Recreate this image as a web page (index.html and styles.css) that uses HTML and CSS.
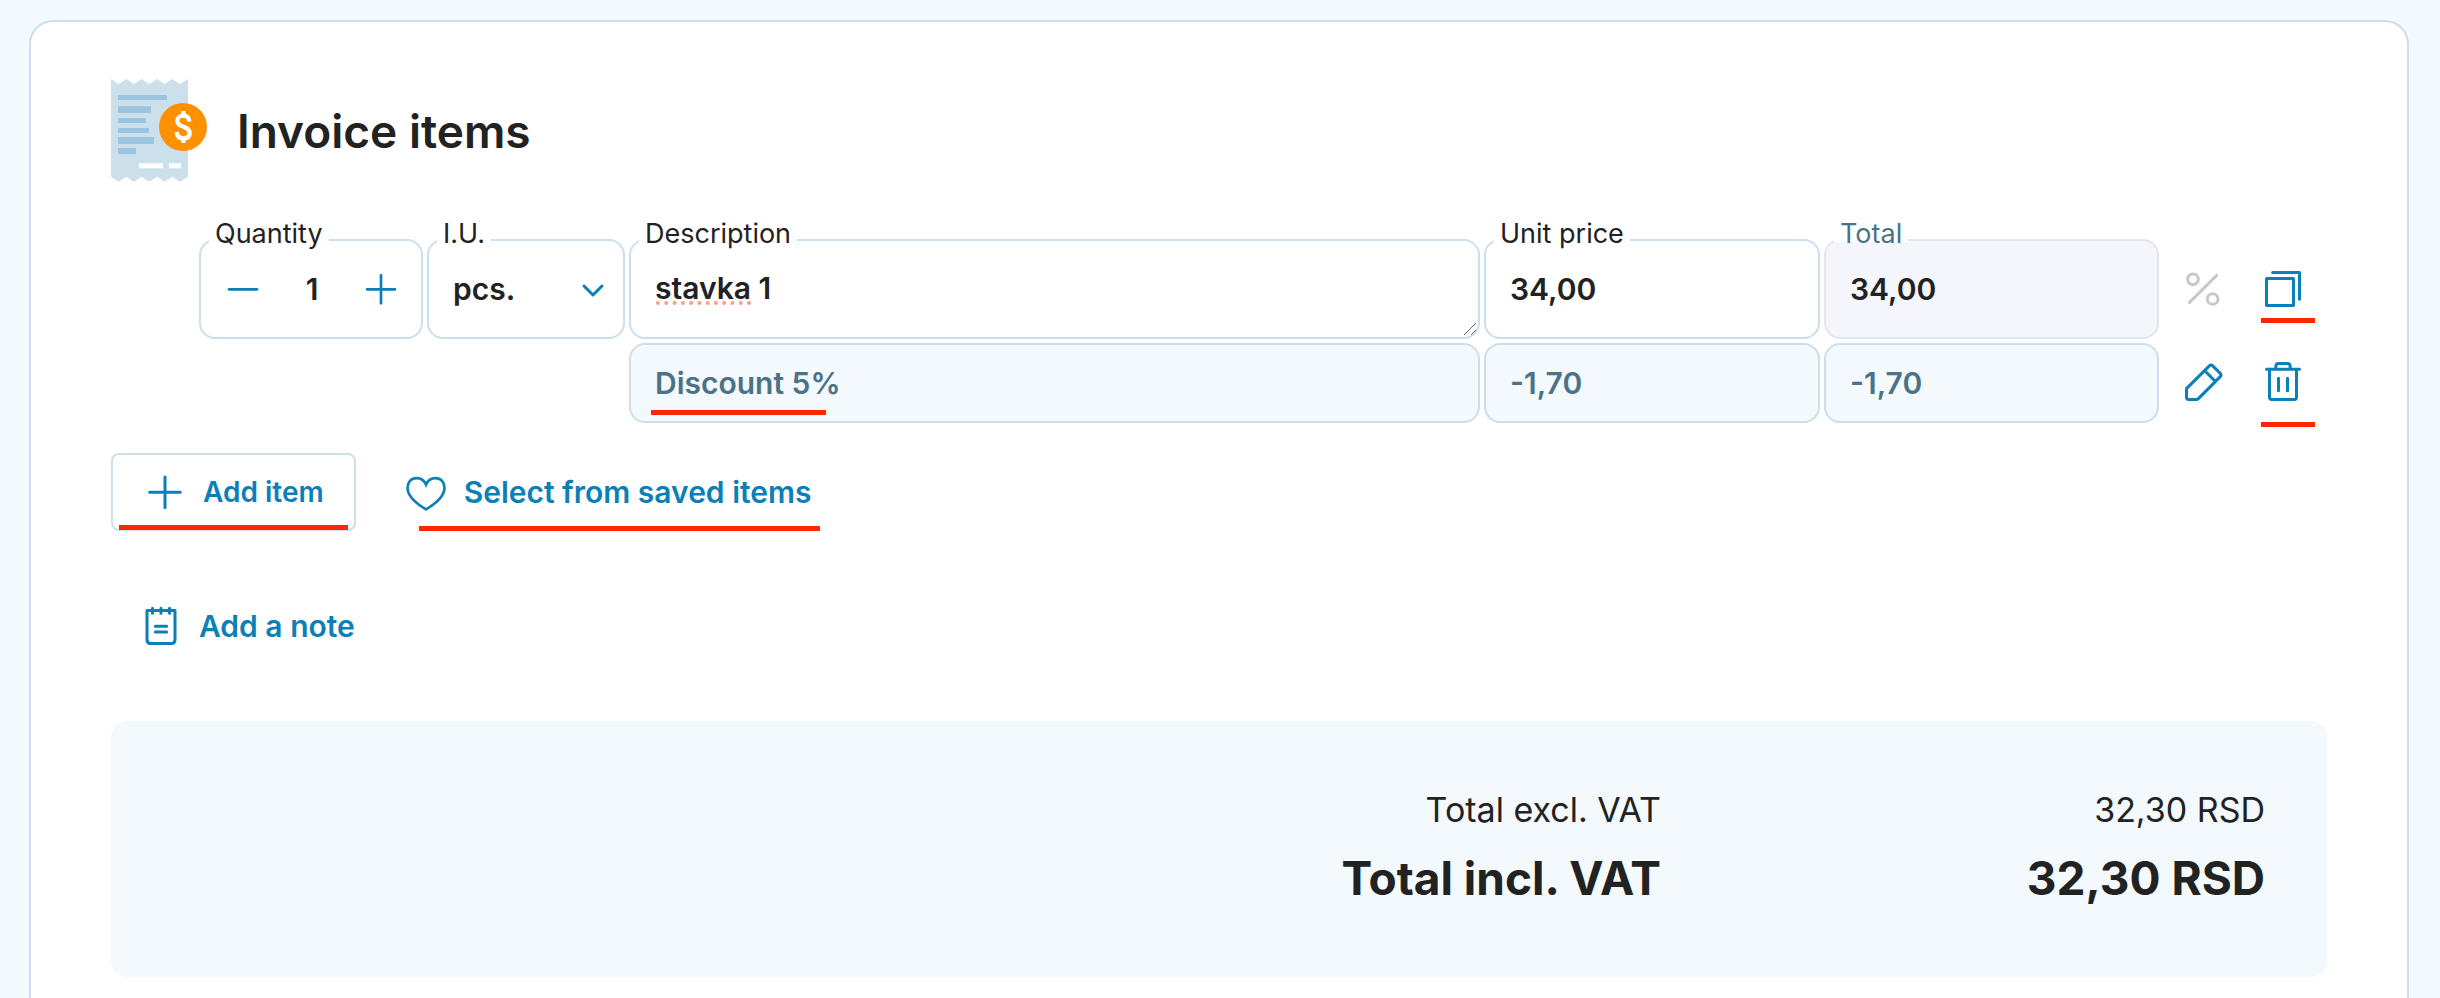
FILE: index.html
```html
<!DOCTYPE html>
<html lang="en">
<head>
<meta charset="utf-8">
<meta name="viewport" content="width=device-width, initial-scale=1">
<title>Invoice items</title>
<link rel="stylesheet" href="styles.css">
</head>
<body>
<main class="card">
  <header class="card-header">
    <svg class="receipt" viewBox="0 0 288 309" aria-hidden="true">
      <path fill="#cce0ec" d="M0 0L23 15L46 0L69 15L92 0L115 15L138 0L161 15L184 0L207 15L231 0V293L207 308L184 293L161 308L138 293L115 308L92 293L69 308L46 293L23 308L0 293Z"/>
      <path fill="#9cc4df" d="M21 48H168V63H21ZM21 82H120V102H21ZM21 117H105V132H21ZM21 147H114V162H21ZM21 174H129V195H21ZM21 207H75V225H21Z"/>
      <path fill="#fff" d="M84 253H156V268H84ZM174 253H210V268H174Z"/>
      <circle cx="216" cy="144" r="72" fill="#ff9100"/>
      <path fill="none" stroke="#fff" stroke-width="13" stroke-linecap="butt" d="M217 96V110M217 178V192M235 128C234 115 226 110 217 110C207 110 199 116 199 126C199 148 236 139 236 162C236 173 228 178 217 178C206 178 198 173 197 159"/>
    </svg>
    <h1 class="title">Invoice items</h1>
  </header>

  <form class="items">
    <div class="item-grid">
      <div class="field">
        <label class="field-label" for="qty">Quantity</label>
        <div class="box stepper">
          <button class="step" type="button" aria-label="Decrease">
            <svg class="icon" viewBox="0 0 120 120"><path stroke-width="8" d="M18 61H102"/></svg>
          </button>
          <input class="qty" id="qty" type="text" value="1">
          <button class="step" type="button" aria-label="Increase">
            <svg class="icon" viewBox="0 0 120 120"><path stroke-width="8" d="M18 61H102M60 19V103"/></svg>
          </button>
        </div>
      </div>
      <div class="field">
        <label class="field-label" for="unit">I.U.</label>
        <select class="box value" id="unit"><option>pcs.</option></select>
        <svg class="chevron" viewBox="0 0 24 16" aria-hidden="true"><path d="M3 3L12 12L21 3"/></svg>
      </div>
      <div class="field">
        <label class="field-label" for="desc">Description</label>
        <textarea class="box value desc" id="desc" rows="1" spellcheck="false">stavka 1</textarea>
        <svg class="spelling" viewBox="0 0 96 4" aria-hidden="true"><path d="M2 2H94"/></svg>
        <svg class="grip" viewBox="0 0 14 14" aria-hidden="true"><path d="M1 13L13 1M8 13L13 8"/></svg>
      </div>
      <div class="field">
        <label class="field-label" for="price">Unit price</label>
        <input class="box value" id="price" type="text" value="34,00">
      </div>
      <div class="field">
        <label class="field-label muted" for="total">Total</label>
        <input class="box value locked" id="total" type="text" value="34,00" readonly>
      </div>
      <div class="actions">
        <button class="action" type="button" aria-label="Discount">
          <svg class="icon faded" viewBox="0 0 120 120"><circle cx="30" cy="31" r="16"/><circle cx="89" cy="90" r="16"/><path d="M19 101L101 19"/></svg>
        </button>
        <button class="action" type="button" aria-label="Duplicate">
          <svg class="icon" viewBox="0 0 120 120"><rect x="10.5" y="28.5" width="81" height="81" rx="1"/><path d="M29 10.5H109.500V91"/></svg>
          <span class="mark mark-copy"></span>
        </button>
      </div>

      <div class="discount">
        <input class="box value computed" type="text" value="Discount 5%" aria-label="Discount description" readonly>
        <span class="mark mark-discount"></span>
      </div>
      <input class="box value computed" type="text" value="-1,70" aria-label="Discount unit price" readonly>
      <input class="box value computed" type="text" value="-1,70" aria-label="Discount total" readonly>
      <div class="actions">
        <button class="action" type="button" aria-label="Edit">
          <svg class="icon" viewBox="0 0 120 120"><path d="M10.500 77L79 8.500Q84 3.500 89 8.500L112 31Q116 36 112 41L47 106Q43.500 109.500 39 109.500H17Q10.500 109.500 10.500 103ZM66 24L96 54"/></svg>
        </button>
        <button class="action" type="button" aria-label="Delete">
          <svg class="icon" viewBox="0 0 120 120"><path d="M10.500 18.500H109.500M38.500 18V10Q38.500 1.500 47 1.500H73Q81.500 1.500 81.500 10V18M19.500 19V103Q19.500 109.500 26 109.500H94Q100.500 109.500 100.500 103V19M46.500 46V83M73.500 46V83"/></svg>
          <span class="mark mark-delete"></span>
        </button>
      </div>
    </div>

    <div class="buttons">
      <button class="btn btn-outline" type="button">
        <svg class="icon" viewBox="0 0 120 120"><path d="M14 61H106M60 15V107"/></svg>
        Add item
        <span class="mark mark-add"></span>
      </button>
      <button class="btn" type="button">
        <svg class="icon" viewBox="0 0 120 120"><path stroke-width="8" stroke-linejoin="miter" d="M60 38C54 24 42 18.500 32 18.500C15 18.500 4.500 31 4.500 47C4.500 75 35 97 60 112C85 97 115.500 75 115.500 47C115.500 31 105 18.500 88 18.500C78 18.500 66 24 60 38Z"/></svg>
        Select from saved items
        <span class="mark mark-saved"></span>
      </button>
    </div>

    <button class="btn btn-note" type="button">
      <svg class="icon" viewBox="0 0 120 120"><path d="M18 13.500H102V101Q102 112.500 91 112.500H29Q18 112.500 18 101ZM34.500 7V22M60 7V22M85.500 7V22M43 61H77M43 78H77"/></svg>
      Add a note
    </button>
  </form>

  <dl class="summary">
    <dt class="sum">Total excl. VAT</dt>
    <dd class="sum">32,30 RSD</dd>
    <dt class="sum sum-strong">Total incl. VAT</dt>
    <dd class="sum sum-strong">32,30 RSD</dd>
  </dl>
</main>
</body>
</html>
```

FILE: styles.css
```css
*,
*::before,
*::after {
  box-sizing: border-box;
}

:root {
  --ink: #222;
  --blue: #0b7fb8;
  --slate: #4a7388;
  --line: #cbdfec;
  --tint: #f3f9fc;
}

body {
  display: flex;
  min-height: 100vh;
  margin: 0;
  padding: 20px 31px 0 29px;
  background: var(--tint);
  color: var(--ink);
  font-family: Inter, "Liberation Sans", sans-serif;
}

.card {
  flex: 1;
  padding: 57px 80px 21px;
  border: 2px solid var(--line);
  border-bottom: 0;
  border-radius: 24px 24px 0 0;
  background: #fff;
}

.card-header {
  display: flex;
  align-items: center;
  gap: 30px;
}

.receipt {
  width: 96px;
  height: 103px;
}

.title {
  margin: 0;
  font-size: 46px;
  line-height: 56px;
  font-weight: 600;
}

.item-grid {
  display: grid;
  grid-template-columns: 224px 198px 1fr 336px 335px 164px;
  gap: 4px;
  margin: 57px 0 0 88px;
}

.field,
.discount {
  position: relative;
  display: grid;
}

.field {
  height: 100px;
}

.field-label {
  position: absolute;
  top: -21px;
  left: 10px;
  padding: 0 6px;
  background: #fff;
  font-size: 27px;
  line-height: 32px;
}

.muted {
  background: linear-gradient(#fff 24px, transparent 24px);
  color: var(--slate);
}

.box {
  width: 100%;
  min-width: 0;
  height: 100%;
  margin: 0;
  border: 2px solid var(--line);
  border-radius: 16px;
  background: #fff;
}

.value {
  padding: 0 24px;
  color: var(--ink);
  font: 600 30px/36px Inter, "Liberation Sans", sans-serif;
  outline: 0;
  appearance: none;
}

.desc {
  padding-top: 29px;
  overflow: hidden;
  resize: none;
}

.locked {
  border-color: #e1e7ee;
  background: #f5f6fb;
}

.computed {
  height: 80px;
  background: var(--tint);
  color: var(--slate);
}

.stepper {
  display: flex;
  padding-left: 2px;
}

.step,
.action {
  display: grid;
  place-items: center;
  width: 80px;
  padding: 0;
  border: 0;
  background: none;
}

.qty {
  flex: 1;
  min-width: 0;
  padding: 0;
  border: 0;
  background: none;
  color: var(--ink);
  font: 600 30px/36px Inter, "Liberation Sans", sans-serif;
  text-align: center;
}

.icon {
  flex: none;
  width: 40px;
  height: 40px;
  overflow: visible;
  fill: none;
  stroke: var(--blue);
  stroke-width: 9;
  stroke-linecap: round;
  stroke-linejoin: round;
}

.faded {
  stroke: #c3c9cf;
}

.chevron {
  position: absolute;
  top: 44px;
  right: 20px;
  width: 24px;
  height: 16px;
  fill: none;
  stroke: var(--blue);
  stroke-width: 3;
  stroke-linecap: round;
  stroke-linejoin: round;
  pointer-events: none;
}

.spelling {
  position: absolute;
  top: 62px;
  left: 27px;
  width: 96px;
  height: 4px;
  stroke: #ff9d7e;
  stroke-width: 4;
  stroke-linecap: round;
  stroke-dasharray: 0 8.270;
}

.grip {
  position: absolute;
  right: 3px;
  bottom: 3px;
  width: 14px;
  height: 14px;
  stroke: #666;
  stroke-width: 1;
}

.discount {
  grid-column: 3;
}

.actions {
  display: flex;
}

.action,
.btn {
  position: relative;
}

/* Red highlight strokes laid over the controls */
.mark {
  position: absolute;
  height: 5px;
  background: #ff2600;
}

.mark-copy,
.mark-delete {
  left: 18px;
  width: 54px;
}

.mark-copy {
  bottom: 16px;
}

.mark-delete {
  bottom: -4px;
}

.mark-discount {
  left: 22px;
  bottom: 8px;
  width: 175px;
}

.mark-add {
  right: 6px;
  bottom: -1px;
  left: 6px;
}

.mark-saved {
  right: -8px;
  bottom: 0;
  left: 13px;
}

.buttons {
  display: flex;
  gap: 50px;
  margin-top: 30px;
}

.btn {
  display: flex;
  align-items: center;
  gap: 18px;
  height: 78px;
  padding: 0;
  border: 0;
  background: none;
  color: var(--blue);
  font: 600 30px/36px Inter, "Liberation Sans", sans-serif;
}

.btn-outline {
  padding: 0 30px 0 32px;
  border: 2px solid var(--line);
  border-radius: 8px;
  font-size: 28px;
}

.btn-note {
  height: 60px;
  margin: 65px 0 0 30px;
}

.summary {
  display: grid;
  grid-template-columns: 1fr 604px;
  margin: 65px 0 0;
  padding: 59px 62px 61px 40px;
  border-radius: 16px;
  background: var(--tint);
}

.sum {
  margin: 0;
  font-size: 34px;
  line-height: 60px;
  text-align: right;
}

.sum-strong {
  font-size: 46px;
  line-height: 76px;
  font-weight: 700;
}
```
